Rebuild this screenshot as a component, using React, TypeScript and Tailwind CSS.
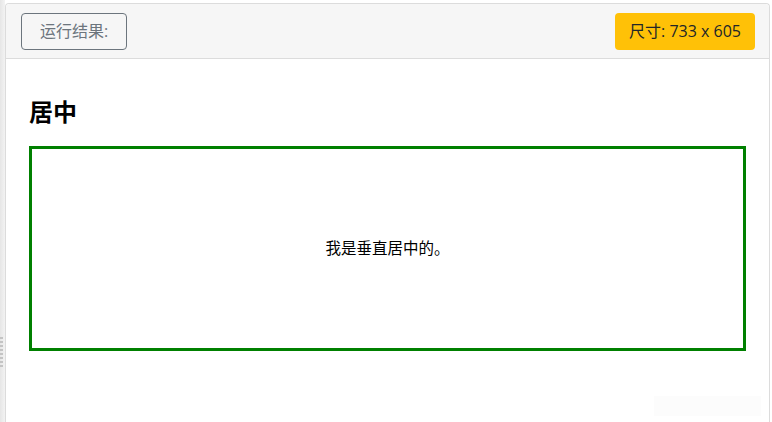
export default function App() {
  const font = { fontFamily: '"Open Sans", "Noto Sans CJK SC", sans-serif' }
  return (
    <div className="flex h-[422px] w-[772px] overflow-hidden bg-white" style={font}>
      {/* left splitter */}
      <div className="relative w-[6px] bg-gradient-to-r from-[#e6e6e6] to-[#f3f3f3]">
        <div className="absolute left-0 top-[337px] flex flex-col gap-[2px]">
          {Array.from({ length: 8 }).map((_, i) => (
            <div key={i} className="h-[2px] w-[3px] bg-[#c4c4c4]" />
          ))}
        </div>
      </div>

      <div className="mr-[2px] mt-[3px] flex flex-1 flex-col rounded-t-[4px] border border-b-0 border-[#dcdcdc]">
        <div className="flex h-[55px] items-center justify-between rounded-t-[4px] border-b border-[#dcdcdc] bg-[#f6f6f6] pl-[15px] pr-[14px]">
          <div className="flex h-[37px] w-[106px] items-center justify-center rounded-[4px] border border-[#6c757d] text-[16px] text-[#6c757d]">
            运行结果:
          </div>
          <div className="flex h-[37px] w-[140px] items-center justify-center rounded-[4px] bg-[#ffc107] text-[16px] text-[#212529]">
            尺寸: 733 x 605
          </div>
        </div>

        <div className="relative flex-1 bg-white px-[23px] pt-[38px]">
          <h2 className="mb-[20px] text-[24px] font-bold leading-[29px] text-black">居中</h2>
          <div className="flex h-[205px] w-[717px] items-center justify-center border-[3px] border-[#008000] text-[15.5px] text-black">
            我是垂直居中的。
          </div>
          <div className="absolute bottom-[6px] right-[8px] h-[20px] w-[107px] bg-[#fcfcfc]" />
        </div>
      </div>
    </div>
  )
}
